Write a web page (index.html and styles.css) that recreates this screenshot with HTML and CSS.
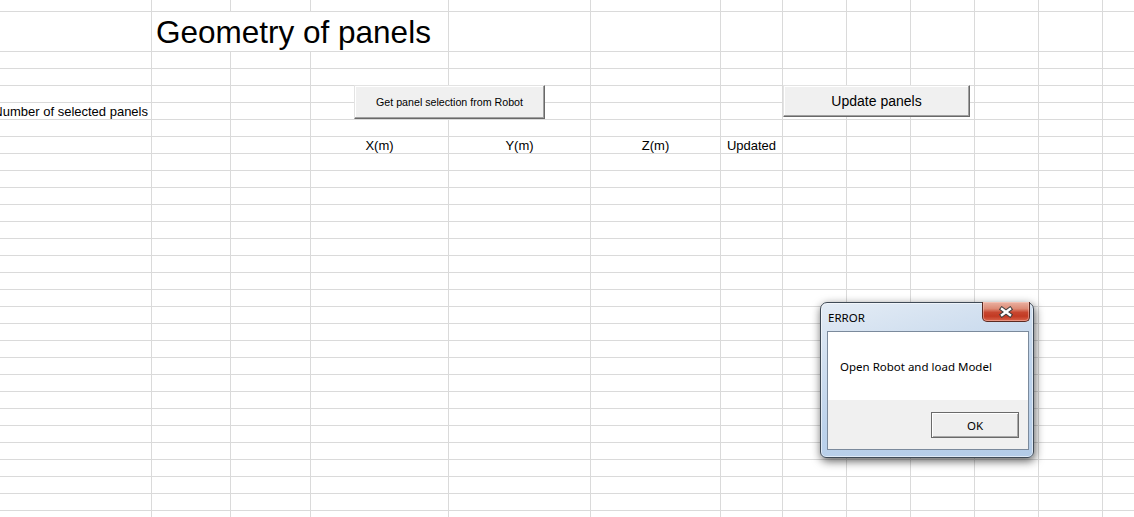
FILE: index.html
```html
<!DOCTYPE html>
<html lang="en">
<head>
<meta charset="utf-8">
<title>Geometry of panels</title>
<link rel="stylesheet" href="styles.css">
</head>
<body>
<div class="workspace">
  <div class="sheet">
    <!-- row 1 -->
    <div class="c"></div><div class="c"></div><div class="c"></div><div class="c"></div><div class="c"></div><div class="c"></div><div class="c"></div><div class="c"></div><div class="c"></div><div class="c"></div><div class="c"></div><div class="c"></div><div class="c"></div>
    <!-- row 2 -->
    <div class="c"></div><div class="c title">Geometry of panels</div><div class="c"></div><div class="c"></div><div class="c"></div><div class="c"></div><div class="c"></div><div class="c"></div><div class="c"></div><div class="c"></div><div class="c"></div>
    <!-- row 3 -->
    <div class="c"></div><div class="c"></div><div class="c"></div><div class="c"></div><div class="c"></div><div class="c"></div><div class="c"></div><div class="c"></div><div class="c"></div><div class="c"></div><div class="c"></div><div class="c"></div><div class="c"></div>
    <!-- row 4 -->
    <div class="c"></div><div class="c"></div><div class="c"></div><div class="c"></div><div class="c"></div><div class="c"></div><div class="c"></div><div class="c"></div><div class="c"></div><div class="c"></div><div class="c"></div><div class="c"></div><div class="c"></div>
    <!-- row 5 -->
    <div class="c"></div><div class="c"></div><div class="c"></div><div class="c"></div><div class="c"></div><div class="c"></div><div class="c"></div><div class="c"></div><div class="c"></div><div class="c"></div><div class="c"></div><div class="c"></div><div class="c"></div>
    <!-- row 6 -->
    <div class="c right">Number of selected panels</div><div class="c"></div><div class="c"></div><div class="c"></div><div class="c"></div><div class="c"></div><div class="c"></div><div class="c"></div><div class="c"></div><div class="c"></div><div class="c"></div><div class="c"></div><div class="c"></div>
    <!-- row 7 -->
    <div class="c"></div><div class="c"></div><div class="c"></div><div class="c"></div><div class="c"></div><div class="c"></div><div class="c"></div><div class="c"></div><div class="c"></div><div class="c"></div><div class="c"></div><div class="c"></div><div class="c"></div>
    <!-- row 8 -->
    <div class="c"></div><div class="c"></div><div class="c"></div><div class="c center">X(m)</div><div class="c center">Y(m)</div><div class="c center">Z(m)</div><div class="c center">Updated</div><div class="c"></div><div class="c"></div><div class="c"></div><div class="c"></div><div class="c"></div><div class="c"></div>
    <!-- rows 9-30 -->
    <div class="c"></div><div class="c"></div><div class="c"></div><div class="c"></div><div class="c"></div><div class="c"></div><div class="c"></div><div class="c"></div><div class="c"></div><div class="c"></div><div class="c"></div><div class="c"></div><div class="c"></div>
    <div class="c"></div><div class="c"></div><div class="c"></div><div class="c"></div><div class="c"></div><div class="c"></div><div class="c"></div><div class="c"></div><div class="c"></div><div class="c"></div><div class="c"></div><div class="c"></div><div class="c"></div>
    <div class="c"></div><div class="c"></div><div class="c"></div><div class="c"></div><div class="c"></div><div class="c"></div><div class="c"></div><div class="c"></div><div class="c"></div><div class="c"></div><div class="c"></div><div class="c"></div><div class="c"></div>
    <div class="c"></div><div class="c"></div><div class="c"></div><div class="c"></div><div class="c"></div><div class="c"></div><div class="c"></div><div class="c"></div><div class="c"></div><div class="c"></div><div class="c"></div><div class="c"></div><div class="c"></div>
    <div class="c"></div><div class="c"></div><div class="c"></div><div class="c"></div><div class="c"></div><div class="c"></div><div class="c"></div><div class="c"></div><div class="c"></div><div class="c"></div><div class="c"></div><div class="c"></div><div class="c"></div>
    <div class="c"></div><div class="c"></div><div class="c"></div><div class="c"></div><div class="c"></div><div class="c"></div><div class="c"></div><div class="c"></div><div class="c"></div><div class="c"></div><div class="c"></div><div class="c"></div><div class="c"></div>
    <div class="c"></div><div class="c"></div><div class="c"></div><div class="c"></div><div class="c"></div><div class="c"></div><div class="c"></div><div class="c"></div><div class="c"></div><div class="c"></div><div class="c"></div><div class="c"></div><div class="c"></div>
    <div class="c"></div><div class="c"></div><div class="c"></div><div class="c"></div><div class="c"></div><div class="c"></div><div class="c"></div><div class="c"></div><div class="c"></div><div class="c"></div><div class="c"></div><div class="c"></div><div class="c"></div>
    <div class="c"></div><div class="c"></div><div class="c"></div><div class="c"></div><div class="c"></div><div class="c"></div><div class="c"></div><div class="c"></div><div class="c"></div><div class="c"></div><div class="c"></div><div class="c"></div><div class="c"></div>
    <div class="c"></div><div class="c"></div><div class="c"></div><div class="c"></div><div class="c"></div><div class="c"></div><div class="c"></div><div class="c"></div><div class="c"></div><div class="c"></div><div class="c"></div><div class="c"></div><div class="c"></div>
    <div class="c"></div><div class="c"></div><div class="c"></div><div class="c"></div><div class="c"></div><div class="c"></div><div class="c"></div><div class="c"></div><div class="c"></div><div class="c"></div><div class="c"></div><div class="c"></div><div class="c"></div>
    <div class="c"></div><div class="c"></div><div class="c"></div><div class="c"></div><div class="c"></div><div class="c"></div><div class="c"></div><div class="c"></div><div class="c"></div><div class="c"></div><div class="c"></div><div class="c"></div><div class="c"></div>
    <div class="c"></div><div class="c"></div><div class="c"></div><div class="c"></div><div class="c"></div><div class="c"></div><div class="c"></div><div class="c"></div><div class="c"></div><div class="c"></div><div class="c"></div><div class="c"></div><div class="c"></div>
    <div class="c"></div><div class="c"></div><div class="c"></div><div class="c"></div><div class="c"></div><div class="c"></div><div class="c"></div><div class="c"></div><div class="c"></div><div class="c"></div><div class="c"></div><div class="c"></div><div class="c"></div>
    <div class="c"></div><div class="c"></div><div class="c"></div><div class="c"></div><div class="c"></div><div class="c"></div><div class="c"></div><div class="c"></div><div class="c"></div><div class="c"></div><div class="c"></div><div class="c"></div><div class="c"></div>
    <div class="c"></div><div class="c"></div><div class="c"></div><div class="c"></div><div class="c"></div><div class="c"></div><div class="c"></div><div class="c"></div><div class="c"></div><div class="c"></div><div class="c"></div><div class="c"></div><div class="c"></div>
    <div class="c"></div><div class="c"></div><div class="c"></div><div class="c"></div><div class="c"></div><div class="c"></div><div class="c"></div><div class="c"></div><div class="c"></div><div class="c"></div><div class="c"></div><div class="c"></div><div class="c"></div>
    <div class="c"></div><div class="c"></div><div class="c"></div><div class="c"></div><div class="c"></div><div class="c"></div><div class="c"></div><div class="c"></div><div class="c"></div><div class="c"></div><div class="c"></div><div class="c"></div><div class="c"></div>
    <div class="c"></div><div class="c"></div><div class="c"></div><div class="c"></div><div class="c"></div><div class="c"></div><div class="c"></div><div class="c"></div><div class="c"></div><div class="c"></div><div class="c"></div><div class="c"></div><div class="c"></div>
    <div class="c"></div><div class="c"></div><div class="c"></div><div class="c"></div><div class="c"></div><div class="c"></div><div class="c"></div><div class="c"></div><div class="c"></div><div class="c"></div><div class="c"></div><div class="c"></div><div class="c"></div>
    <div class="c"></div><div class="c"></div><div class="c"></div><div class="c"></div><div class="c"></div><div class="c"></div><div class="c"></div><div class="c"></div><div class="c"></div><div class="c"></div><div class="c"></div><div class="c"></div><div class="c"></div>
    <div class="c"></div><div class="c"></div><div class="c"></div><div class="c"></div><div class="c"></div><div class="c"></div><div class="c"></div><div class="c"></div><div class="c"></div><div class="c"></div><div class="c"></div><div class="c"></div><div class="c"></div>
  </div>

  <button class="sheet-btn btn-get" type="button">Get panel selection from Robot</button>
  <button class="sheet-btn btn-update" type="button">Update panels</button>

  <div class="dialog">
    <div class="dialog-titlebar">
      <span class="dialog-title">ERROR</span>
      <span class="dialog-close">
        <svg width="16" height="12" viewBox="0 0 16 12">
          <path d="M4 3 L12 9 M12 3 L4 9" stroke="#3d3d3d" stroke-width="4.4" stroke-linecap="square" fill="none"/>
          <path d="M4 3 L12 9 M12 3 L4 9" stroke="#ffffff" stroke-width="2.4" stroke-linecap="square" fill="none"/>
        </svg>
      </span>
    </div>
    <div class="dialog-client">
      <div class="dialog-message">Open Robot and load Model</div>
      <div class="dialog-footer">
        <button class="dialog-ok" type="button">OK</button>
      </div>
    </div>
  </div>
</div>
</body>
</html>
```

FILE: styles.css
```css
* { box-sizing: border-box; }

html, body {
  margin: 0;
  padding: 0;
  background: #ffffff;
  overflow: hidden;
}

body {
  font-family: "Liberation Sans", Arial, sans-serif;
  color: #000;
}

.workspace {
  position: relative;
  width: 1134px;
  height: 517px;
  overflow: hidden;
}

/* spreadsheet grid */
.sheet {
  display: grid;
  grid-template-columns: 152px 79px 80px 138px 142px 130px 62px 64px 64px 64px 64px 64px 64px;
  grid-template-rows: 12px 40px;
  grid-auto-rows: 17px;
  width: 1167px;
}

.c {
  border-right: 1px solid #dadada;
  border-bottom: 1px solid #dadada;
  font-size: 13px;
  line-height: 15px;
  display: flex;
  align-items: flex-end;
  white-space: nowrap;
  min-width: 0;
  padding-bottom: 0;
}

.title {
  grid-column: span 3;
  font-size: 31.5px;
  line-height: 37px;
  padding-left: 4px;
  padding-bottom: 0;
}

.right {
  justify-content: flex-end;
  padding-right: 3px;
}

.center {
  justify-content: center;
}

/* floating form buttons on the sheet */
.sheet-btn {
  position: absolute;
  margin: 0;
  padding: 0;
  font-family: "Liberation Sans", Arial, sans-serif;
  color: #000;
  background: #f0f0f0;
  border-style: solid;
  border-width: 1px;
  border-color: #e3e3e3 #696969 #696969 #e3e3e3;
  box-shadow: inset -1px -1px 0 #a0a0a0, inset 1px 1px 0 #ffffff;
  border-radius: 0;
}

.btn-get {
  left: 354px;
  top: 85px;
  width: 191px;
  height: 34px;
  font-size: 10.67px;
}

.btn-update {
  left: 783px;
  top: 85px;
  width: 187px;
  height: 32px;
  font-size: 14px;
}

/* error dialog */
.dialog {
  position: absolute;
  left: 820px;
  top: 302px;
  width: 214px;
  height: 156px;
  display: flex;
  flex-direction: column;
  padding: 0 4px 7px 6px;
  border: 1px solid #3f4a56;
  border-radius: 7px 7px 6px 6px;
  background: linear-gradient(165deg, #e4ecf5 0%, #cfdeef 30%, #bcd2eb 60%, #b3cbe7 100%);
  box-shadow: inset 0 0 0 1px rgba(255, 255, 255, 0.55), 1px 3px 10px rgba(0, 0, 0, 0.65);
  font-family: "Noto Sans", "DejaVu Sans", sans-serif;
}

.dialog-titlebar {
  height: 28px;
  display: flex;
  align-items: flex-start;
  justify-content: space-between;
}

.dialog-title {
  font-size: 11.5px;
  line-height: 16px;
  padding-top: 7px;
  padding-left: 1px;
  color: #000;
}

.dialog-close {
  width: 48px;
  height: 20px;
  margin-top: -1px;
  margin-right: -1px;
  display: flex;
  align-items: center;
  justify-content: center;
  border: 1px solid #5b2a22;
  border-top: none;
  border-radius: 0 0 5px 5px;
  background: linear-gradient(to bottom, #eab2a3 0%, #dd8b76 35%, #c8462f 55%, #c23a23 75%, #d9654c 100%);
  box-shadow: inset 0 0 0 1px rgba(255, 210, 200, 0.45);
}

.dialog-close svg {
  display: block;
}

.dialog-client {
  flex: 1;
  display: flex;
  flex-direction: column;
  border: 1px solid #7b8a9c;
  background: #f0f0f0;
}

.dialog-message {
  height: 68px;
  background: #ffffff;
  display: flex;
  align-items: center;
  padding-left: 12px;
  font-size: 11.5px;
  color: #000;
}

.dialog-footer {
  flex: 1;
  display: flex;
  justify-content: flex-end;
  align-items: flex-start;
  padding: 12px 9px 0 0;
}

.dialog-ok {
  width: 88px;
  height: 26px;
  margin: 0;
  padding: 0;
  font-family: "Noto Sans", "DejaVu Sans", sans-serif;
  font-size: 11.5px;
  color: #000;
  background: #efefef;
  border: 1px solid #6a6a6a;
  border-radius: 0;
  box-shadow: inset 1px 1px 0 #ffffff, inset -1px -1px 0 #a9a9a9;
}
```
